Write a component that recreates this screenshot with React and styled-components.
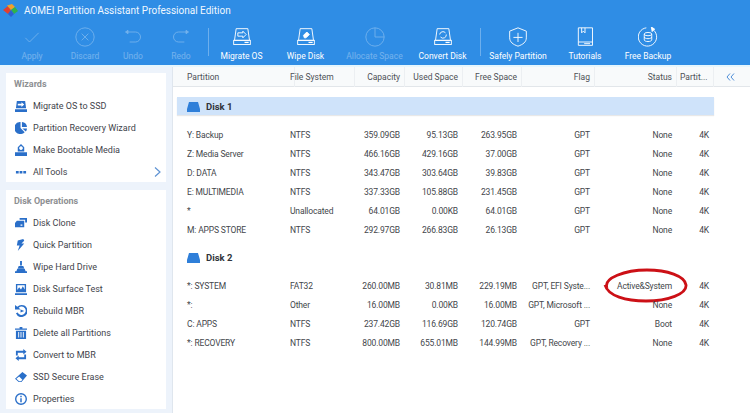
import React from 'react';
import styled, { createGlobalStyle } from 'styled-components';

const GlobalStyle = createGlobalStyle`
    html, body {
        margin: 0;
        padding: 0;
        background: #fff;
    }
    body {
        font-family: Roboto, "Liberation Sans", sans-serif;
    }
`;

const Root = styled.div`
    width: 750px;
    height: 413px;
    display: flex;
    flex-direction: column;
    overflow: hidden;
`;

// Header //
const Header = styled.header`
    flex: 0 0 65px;
    background-color: #2f8de5;
    color: #fff;
`;

const TitleBar = styled.div`
    height: 21px;
    padding: 0 3px;
    display: flex;
    align-items: center;
    gap: 6px;
`;

const Title = styled.span`
    font-size: 10px;
    color: #f0f7ff;
    white-space: nowrap;
`;

const Toolbar = styled.div`
    height: 44px;
    padding-left: 6px;
    display: flex;
`;

const Tool = styled.div`
    flex: 0 0 ${({ $width }) => $width}px;
    display: flex;
    flex-direction: column;
    align-items: center;
    opacity: ${({ $off }) => ($off ? 0.32 : 1)};
`;

const ToolIcon = styled.svg`
    width: 20px;
    height: 20px;
    margin-top: 6px;
    fill: none;
    stroke: #fff;
    stroke-width: 1.1;
`;

const ToolLabel = styled.span`
    margin-top: 3px;
    font-size: 8.5px;
    line-height: 12px;
    white-space: nowrap;
`;

const ToolSep = styled.div`
    flex: 0 0 1px;
    height: 28px;
    margin: 7px 0 0 ${({ $left }) => $left || 0}px;
    background-color: rgba(255, 255, 255, 0.3);
`;

// Layout //
const Body = styled.div`
    flex: 1;
    display: flex;
    min-height: 0;
    border-top: 2px solid #e6f6fd;
`;

const Sidebar = styled.aside`
    flex: 0 0 172px;
    padding: 6px 6px 0;
    box-sizing: border-box;
    background-color: #edf3fb;
    border-right: 1px solid #dfe6ee;
    display: flex;
    flex-direction: column;
    gap: 8px;
`;

const Card = styled.section`
    width: 160px;
    background-color: #fff;
`;

const CardTitle = styled.h3`
    margin: 0;
    height: 21px;
    padding-left: 8px;
    font-size: 9px;
    font-weight: 700;
    line-height: 22px;
    color: #8d8f92;
`;

const NavItem = styled.div`
    height: 22px;
    padding: 1px 5px 0 9px;
    box-sizing: border-box;
    display: flex;
    align-items: center;
    gap: 5px;
    font-size: 9px;
    color: #3f444b;
`;

const NavIcon = styled.svg`
    flex: 0 0 12px;
    width: 12px;
    height: 12px;
    margin-right: 1px;
    fill: #2a6fc9;
`;

const Chevron = styled.svg`
    width: 7px;
    height: 10px;
    margin-left: auto;
    fill: none;
    stroke: #5f93d3;
    stroke-width: 1.2;
`;

// Table //
const Main = styled.main`
    flex: 1;
    min-width: 0;
    background-color: #fff;
`;

const columns = '103px 60px 50px 58px 59px 73px 82px 37px';

const HeadRow = styled.div`
    height: 19px;
    padding-left: 14px;
    display: grid;
    grid-template-columns: ${columns} 1fr;
    align-items: center;
    background-color: #f8fafb;
    border-bottom: 1px solid #e2e6ea;
    font-size: 8.5px;
    color: #4d5056;
`;

const Cell = styled.div`
    position: relative;
    white-space: nowrap;
    text-align: ${({ $left }) => ($left ? 'left' : 'right')};
`;

const HeadCell = styled(Cell)`
    padding-left: ${({ $pad }) => $pad || 0}px;
    &::after {
        content: '';
        position: absolute;
        top: -5px;
        bottom: -5px;
        right: -5px;
        width: 1px;
        background-color: #eceff2;
    }
`;

const Collapse = styled.svg`
    width: 9px;
    height: 8px;
    margin-left: 17px;
    fill: none;
    stroke: #4f8fd8;
    stroke-width: 1;
`;

const Disk = styled.div`
    height: 18px;
    margin: ${({ $top }) => $top}px 36px 10px 4px;
    padding: 1px 0 0 10px;
    box-sizing: border-box;
    display: flex;
    align-items: center;
    gap: 6px;
    font-size: 9.5px;
    font-weight: 700;
    color: #30343a;
    background-color: ${({ $active }) => ($active ? '#cfe3fa' : 'transparent')};
    box-shadow: ${({ $active }) => ($active ? '0 1px 1px #e8e8e8' : 'none')};
`;

const DiskIcon = styled.svg`
    width: 13px;
    height: 10px;
    fill: #2f7fd9;
`;

const Row = styled.div`
    height: 19px;
    padding-left: 14px;
    display: grid;
    grid-template-columns: ${columns};
    align-items: center;
    font-size: 8.5px;
    letter-spacing: -0.15px;
    color: #43464b;
`;

const Circle = styled.svg`
    position: absolute;
    top: 50%;
    right: -16px;
    margin-top: -18px;
    width: 85px;
    height: 35px;
    fill: none;
    stroke: #cc1016;
    stroke-width: 2.8;
`;

const LogoIcon = styled.svg`
    width: 15px;
    height: 13px;
`;

const Logo = () => (
    <LogoIcon viewBox="0 0 15 13">
        <path d="M0 6 5 2l3 4-3 4z" fill="#e2402f" />
        <path d="M4 1.500 9 0l3 3-4 3z" fill="#f0a12b" />
        <path d="M8 6l4-3 3 4-4 3z" fill="#2fb34a" />
        <path d="M5 10l3-4 3 4-3 3z" fill="#2f5fd0" />
    </LogoIcon>
);

const toolIcons = {
    check: <path d="M4 13l5 5L20 7" />,
    discard: (
        <>
            <circle cx="12" cy="12" r="11" />
            <path d="M8 8l8 8M16 8l-8 8" />
        </>
    ),
    undo: (
        <>
            <path d="M5 6h10a6 6 0 0 1 0 12H8" />
            <path d="M6 4v4L3 6z" fill="#fff" />
        </>
    ),
    redo: (
        <>
            <path d="M19 6H9a6 6 0 0 0 0 12h7" />
            <path d="M18 4v4l3-2z" fill="#fff" />
        </>
    ),
    migrate: (
        <>
            <path d="M5 2h14l2 14H3z" />
            <rect x="2" y="16" width="20" height="5" />
            <path d="M7 7h6V5l4 4-4 4v-2H7z" />
            <path d="M15 18.500h5" strokeWidth="1.500" />
        </>
    ),
    wipe: (
        <>
            <path d="M5 2h14l2 14H3z" />
            <rect x="2" y="16" width="20" height="5" />
            <path d="M9 10l4-4 3 3-4 4h-2z" fill="#fff" />
            <path d="M15 18.500h5" strokeWidth="1.500" />
        </>
    ),
    allocate: (
        <>
            <circle cx="12" cy="12" r="11" />
            <path d="M12 1v11h11" />
        </>
    ),
    convert: (
        <>
            <path d="M5 2h14l2 14H3z" />
            <rect x="2" y="16" width="20" height="5" />
            <path d="M8 9a4 4 0 0 1 7-2M16 9a4 4 0 0 1-7 3" />
            <path d="M15 18.500h5" strokeWidth="1.500" />
        </>
    ),
    shield: (
        <>
            <path d="M12 1 22 5v8c0 5-4 8-10 10C6 21 2 18 2 13V5z" />
            <path d="M12 7v11M6.500 12.500h11" />
        </>
    ),
    book: (
        <>
            <path d="M4 1h17v21H4zM4 18h17M11 20h7" />
            <path d="M8 1v6l2-2 2 2V1" />
        </>
    ),
    backup: (
        <>
            <path d="M19 4a11 11 0 1 1-9-3" />
            <path d="M16 0l4 2.500-3 3z" fill="#fff" />
            <ellipse cx="12" cy="8.500" rx="4.500" ry="2" />
            <path d="M7.500 8.500v7c0 1 2 2 4.500 2s4.500-1 4.500-2v-7M7.500 12c0 1 2 2 4.500 2s4.500-1 4.500-2" />
        </>
    ),
};

const tools = [
    { label: 'Apply', icon: 'check', width: 52, off: true },
    { label: 'Discard', icon: 'discard', width: 54, off: true },
    { label: 'Undo', icon: 'undo', width: 42, off: true },
    { label: 'Redo', icon: 'redo', width: 54, off: true },
    { sep: true },
    { label: 'Migrate OS', icon: 'migrate', width: 65 },
    { label: 'Wipe Disk', icon: 'wipe', width: 63 },
    { label: 'Allocate Space', icon: 'allocate', width: 75, off: true },
    { label: 'Convert Disk', icon: 'convert', width: 61 },
    { sep: true, left: 7 },
    { label: 'Safely Partition', icon: 'shield', width: 74 },
    { label: 'Tutorials', icon: 'book', width: 60 },
    { label: 'Free Backup', icon: 'backup', width: 66 },
];

const navIcons = {
    migrate: <path d="M2 1h9l1 8H1zM0 10h13v3H0zM3 4h4V2.500L10 5 7 7.500V6H3z" fillRule="evenodd" />,
    recovery: <path d="M6 0v6.500l4.500 4.500A6.500 6.500 0 0 1 1 11a6.500 6.500 0 0 1 5-11zM7.500 0A6 6 0 0 1 13 5.500H7.500zM8 7h5a6 6 0 0 1-1.300 3.400z" />,
    bootable: <path d="M6.500 0 10 3.500V8H3V3.500zM6.500 2.500a2 2 0 1 0 .01 0zM0 9h13v4H0z" fillRule="evenodd" />,
    more: <path d="M1 5.500h3v2.500H1zM5 5.500h3v2.500H5zM9 5.500h3v2.500H9z" />,
    clone: <path d="M5 1h8v5h-2V3H5zM0 6.500 2 4h8v7H0zM6 8h2v1.500H6z" fillRule="evenodd" />,
    quick: <path d="M9 0 3 1.500 2 7h3l-2 6 7-8H7l3-3z" />,
    wipe: <path d="M5.500 0h2v5h-2zM4 5.500h5l1 2.500H3zM2.500 8.500h8l1 2.500H13v2H0v-2h1.500z" />,
    surface: <path d="M1 1h11v9H1zM2.500 2.500v5l2-3 2 2.500 2-3.500 2 3.500v-4.500zM0 11h13v2H0z" fillRule="evenodd" />,
    rebuild: <path d="M7 0a6.500 6.500 0 1 1-6 9l2-1a4.500 4.500 0 1 0 1-5l2 2H0V0l2.500 2A6.500 6.500 0 0 1 7 0zM6 5l4 1.500L6 8z" fillRule="evenodd" />,
    trash: <path d="M5 0h3v1.500h5V3H0V1.500h5zM1 4h11v9H1zM3.500 5.500v6h1v-6zM6 5.500v6h1v-6zM8.500 5.500v6h1v-6z" fillRule="evenodd" />,
    convert: <path d="M1 2h8V0l3.500 3L9 6V4H3v3H1zM12 11H4v2L.500 10 4 7v2h6V6h2z" />,
    erase: <path d="M8 1l5 4-6 7H4L0 8.500zM1.500 8.500 4.500 11h2L8 9.500 4.500 6z" />,
    info: <path d="M6.500 0a6.500 6.500 0 1 1 0 13 6.500 6.500 0 0 1 0-13zm0 1.500a5 5 0 1 0 0 10 5 5 0 0 0 0-10zM5.700 3h1.600v1.600H5.700zm0 2.600h1.600V10H5.700z" fillRule="evenodd" />,
};

const wizards = [
    { label: 'Migrate OS to SSD', icon: 'migrate' },
    { label: 'Partition Recovery Wizard', icon: 'recovery' },
    { label: 'Make Bootable Media', icon: 'bootable' },
    { label: 'All Tools', icon: 'more', more: true },
];

const operations = [
    { label: 'Disk Clone', icon: 'clone' },
    { label: 'Quick Partition', icon: 'quick' },
    { label: 'Wipe Hard Drive', icon: 'wipe' },
    { label: 'Disk Surface Test', icon: 'surface' },
    { label: 'Rebuild MBR', icon: 'rebuild' },
    { label: 'Delete all Partitions', icon: 'trash' },
    { label: 'Convert to MBR', icon: 'convert' },
    { label: 'SSD Secure Erase', icon: 'erase' },
    { label: 'Properties', icon: 'info' },
];

const disk1 = [
    ['Y: Backup', 'NTFS', '359.09GB', '95.13GB', '263.95GB', 'GPT', 'None', '4K'],
    ['Z: Media Server', 'NTFS', '466.16GB', '429.16GB', '37.00GB', 'GPT', 'None', '4K'],
    ['D: DATA', 'NTFS', '343.47GB', '303.64GB', '39.83GB', 'GPT', 'None', '4K'],
    ['E: MULTIMEDIA', 'NTFS', '337.33GB', '105.88GB', '231.45GB', 'GPT', 'None', '4K'],
    ['*', 'Unallocated', '64.01GB', '0.00KB', '64.01GB', 'GPT', 'None', '4K'],
    ['M: APPS STORE', 'NTFS', '292.97GB', '266.83GB', '26.13GB', 'GPT', 'None', '4K'],
];

const disk2 = [
    ['*: SYSTEM', 'FAT32', '260.00MB', '30.81MB', '229.19MB', 'GPT, EFI Syste...', 'Active&System', '4K'],
    ['*:', 'Other', '16.00MB', '0.00KB', '16.00MB', 'GPT, Microsoft ...', 'None', '4K'],
    ['C: APPS', 'NTFS', '237.42GB', '116.69GB', '120.74GB', 'GPT', 'Boot', '4K'],
    ['*: RECOVERY', 'NTFS', '800.00MB', '655.01MB', '144.99MB', 'GPT, Recovery ...', 'None', '4K'],
];

const NavCard = ({ title, items }) => (
    <Card>
        <CardTitle>{title}</CardTitle>
        {items.map(item => (
            <NavItem key={item.label}>
                <NavIcon viewBox="0 0 13 13">{navIcons[item.icon]}</NavIcon>
                {item.label}
                {item.more && (
                    <Chevron viewBox="0 0 7 10">
                        <path d="M1 0.500 6 5 1 9.500" />
                    </Chevron>
                )}
            </NavItem>
        ))}
    </Card>
);

const PartitionRow = ({ cells }) => (
    <Row>
        {cells.map((text, i) => (
            <Cell key={i} $left={i < 2}>
                {text}
                {text === 'Active&System' && (
                    <Circle viewBox="0 0 85 35">
                        <path d="M4 20C0 10 22 2 44 2c20 0 38 6 39 15 1 9-18 16-40 16C23 33 5 28 2 17" />
                    </Circle>
                )}
            </Cell>
        ))}
    </Row>
);

const DiskHeading = ({ name, top, active }) => (
    <Disk $top={top} $active={active}>
        <DiskIcon viewBox="0 0 13 10">
            <path d="M2 0h9l2 7v3H0V7z" />
        </DiskIcon>
        {name}
    </Disk>
);

const App = () => (
    <Root>
        <GlobalStyle />
        <Header>
            <TitleBar>
                <Logo />
                <Title>AOMEI Partition Assistant Professional Edition</Title>
            </TitleBar>
            <Toolbar>
                {tools.map((tool, i) =>
                    tool.sep ? (
                        <ToolSep key={i} $left={tool.left} />
                    ) : (
                        <Tool key={tool.label} $width={tool.width} $off={tool.off}>
                            <ToolIcon viewBox="0 0 24 24">{toolIcons[tool.icon]}</ToolIcon>
                            <ToolLabel>{tool.label}</ToolLabel>
                        </Tool>
                    )
                )}
            </Toolbar>
        </Header>
        <Body>
            <Sidebar>
                <NavCard title="Wizards" items={wizards} />
                <NavCard title="Disk Operations" items={operations} />
            </Sidebar>
            <Main>
                <HeadRow>
                    <HeadCell $left>Partition</HeadCell>
                    <HeadCell $left>File System</HeadCell>
                    <HeadCell>Capacity</HeadCell>
                    <HeadCell>Used Space</HeadCell>
                    <HeadCell>Free Space</HeadCell>
                    <HeadCell>Flag</HeadCell>
                    <HeadCell>Status</HeadCell>
                    <HeadCell $left $pad={8}>Partit...</HeadCell>
                    <Collapse viewBox="0 0 9 8">
                        <path d="M4 0.500 1 4l3 3.500M8 0.500 5 4l3 3.500" />
                    </Collapse>
                </HeadRow>
                <DiskHeading name="Disk 1" top={10} active />
                {disk1.map(cells => (
                    <PartitionRow key={cells[0]} cells={cells} />
                ))}
                <DiskHeading name="Disk 2" top={9} />
                {disk2.map(cells => (
                    <PartitionRow key={cells[0]} cells={cells} />
                ))}
            </Main>
        </Body>
    </Root>
);

export default App;
